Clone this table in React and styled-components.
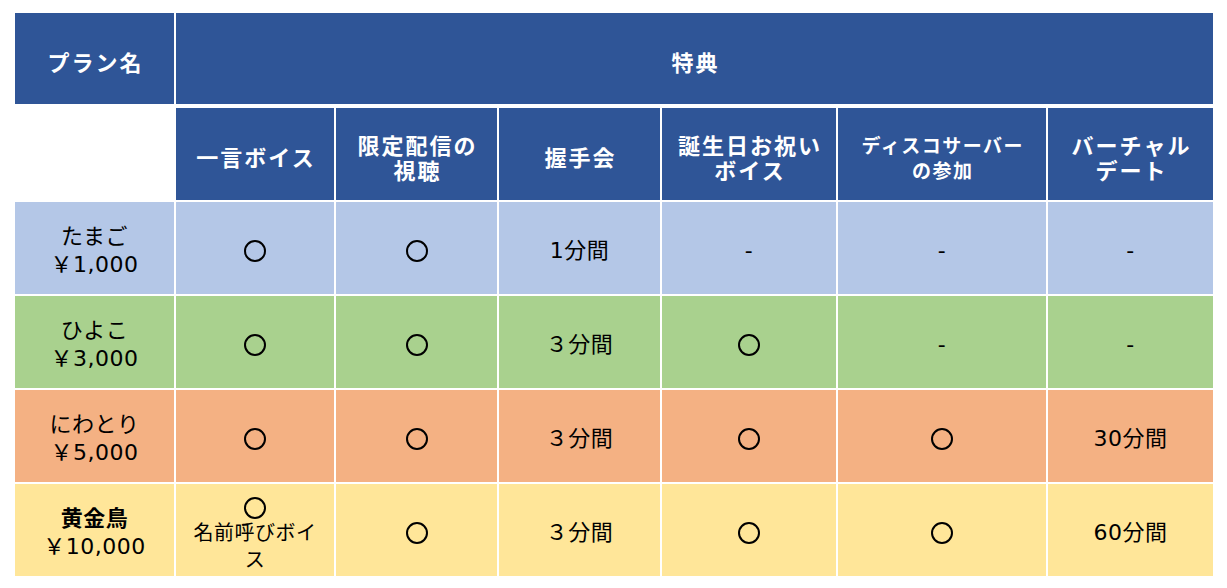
import React from "react";
import styled, { createGlobalStyle } from "styled-components";

const Global = createGlobalStyle`
  html, body { margin: 0; padding: 0; background: #ffffff; }
  body { font-family: "Noto Sans CJK JP", "Noto Sans", sans-serif; }
`;

const Page = styled.div`
  padding: 13px 0 0 15px;
`;

const Grid = styled.div`
  display: grid;
  grid-template-columns: 159px 158px 161px 161px 174px 208px 165px;
  grid-template-rows: 93px 92px repeat(4, 92px);
  gap: 2px;
  width: 1198px;
  background: #ffffff;
`;

const Cell = styled.div`
  display: flex;
  flex-direction: column;
  align-items: center;
  justify-content: center;
  text-align: center;
  box-sizing: border-box;
  padding-top: 5px;
  background: ${(p) => p.$bg || "transparent"};
  grid-column: ${(p) => p.$span || "auto"};
  margin-bottom: ${(p) => (p.$top ? "2px" : "0")};
`;

const HeadText = styled.span`
  display: block;
  color: #ffffff;
  font-weight: 700;
  font-size: ${(p) => p.$size || 22}px;
  line-height: 25px;
  height: 25px;
  letter-spacing: ${(p) => p.$ls ?? 2}px;
  margin-right: -${(p) => p.$ls ?? 2}px;
`;

const BodyText = styled.span`
  display: block;
  color: #000000;
  font-family: "DejaVu Sans", "Noto Sans CJK JP", sans-serif;
  font-weight: ${(p) => (p.$bold ? 700 : 400)};
  font-size: ${(p) => p.$size || 22}px;
  line-height: ${(p) => p.$lh || 28}px;
  height: ${(p) => p.$lh || 28}px;
  letter-spacing: 0.5px;
`;

const Circle = styled.span`
  display: inline-block;
  width: 18px;
  height: 18px;
  border: 2.2px solid #000;
  border-radius: 50%;
  margin: ${(p) => p.$m || "0"};
`;

const HEAD = "#2f5597";
const rows = [
  { bg: "#b4c7e7", name: "たまご", price: "￥1,000", cells: ["o", "o", "1分間", "-", "-", "-"] },
  { bg: "#a9d18e", name: "ひよこ", price: "￥3,000", cells: ["o", "o", "３分間", "o", "-", "-"] },
  { bg: "#f4b183", name: "にわとり", price: "￥5,000", cells: ["o", "o", "３分間", "o", "o", "30分間"] },
  { bg: "#ffe699", name: "黄金鳥", price: "￥10,000", bold: true, cells: ["special", "o", "３分間", "o", "o", "60分間"] },
];

const heads = [
  ["一言ボイス"],
  ["限定配信の", "視聴"],
  ["握手会"],
  ["誕生日お祝い", "ボイス"],
  ["ディスコサーバー", "の参加"],
  ["バーチャル", "デート"],
];

function Content({ v }) {
  if (v === "o") return <Circle />;
  if (v === "special")
    return (
      <>
        <Circle $m="6px 0 1px" />
        <BodyText $size={20} $lh={27}>名前呼びボイ</BodyText>
        <BodyText $size={20} $lh={27}>ス</BodyText>
      </>
    );
  return <BodyText>{v}</BodyText>;
}

export default function App() {
  return (
    <Page>
      <Global />
      <Grid>
        <Cell $bg={HEAD} $top>
          <HeadText>プラン名</HeadText>
        </Cell>
        <Cell $bg={HEAD} $top $span="span 6">
          <HeadText>特典</HeadText>
        </Cell>
        <Cell />
        {heads.map((h, i) => (
          <Cell key={i} $bg={HEAD}>
            {h.map((t, j) => (
              <HeadText key={j} $size={i === 4 ? 19 : 22} $ls={i === 4 ? 1.5 : 2}>
                {t}
              </HeadText>
            ))}
          </Cell>
        ))}
        {rows.map((r, i) => (
          <React.Fragment key={i}>
            <Cell $bg={r.bg}>
              <BodyText $bold={r.bold}>{r.name}</BodyText>
              <BodyText>{r.price}</BodyText>
            </Cell>
            {r.cells.map((c, j) => (
              <Cell key={j} $bg={r.bg}>
                <Content v={c} />
              </Cell>
            ))}
          </React.Fragment>
        ))}
      </Grid>
    </Page>
  );
}
